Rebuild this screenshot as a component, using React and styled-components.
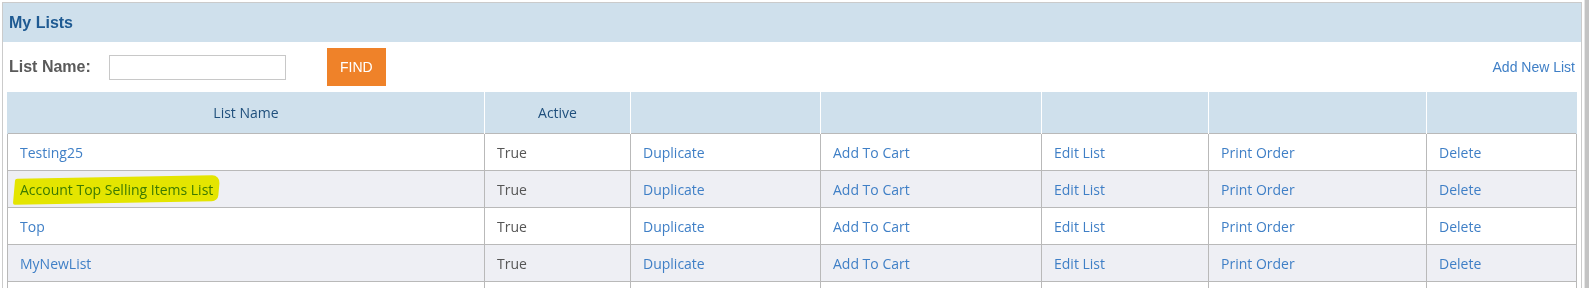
import React from "react";
import styled, { createGlobalStyle } from "styled-components";

const Global = createGlobalStyle`
  html, body { margin: 0; padding: 0; background: #fff; }
  body { font-family: "Open Sans", "Liberation Sans", Arial, sans-serif; }
`;

const Page = styled.div`
  display: flex;
  align-items: flex-start;
  width: 1589px;
  height: 288px;
  overflow: hidden;
`;

const Panel = styled.section`
  flex: 1;
  margin: 2px 0 0 2px;
  border: 1px solid #cbcbcb;
  border-bottom: none;
  height: 290px;
  background: #fff;
`;

const ScrollTrack = styled.div`
  width: 8px;
  height: 288px;
  flex: none;
  box-sizing: border-box;
  border-left: 2px solid #fff;
  border-right: 5px solid #c3c3c3;
  background: #e6e6e6;
`;

const PanelHeader = styled.h2`
  margin: 0;
  height: 39px;
  background: #cfe0ec;
  display: flex;
  align-items: center;
  padding: 0 6px;
  font-family: "Liberation Sans", Arial, sans-serif;
  font-size: 16px;
  font-weight: bold;
  color: #1e5a92;
`;

const Toolbar = styled.div`
  height: 50px;
  display: flex;
  align-items: center;
  padding: 0 6px;
  font-family: "Liberation Sans", Arial, sans-serif;
`;

const Label = styled.label`
  font-size: 16px;
  font-weight: bold;
  color: #5a5a5a;
  margin-right: 18px;
`;

const TextInput = styled.input`
  width: 177px;
  height: 25px;
  box-sizing: border-box;
  border: 1px solid #c8c8c8;
  padding: 2px 4px;
  margin: 0 41px 0 0;
  outline: none;
`;

const FindButton = styled.button`
  width: 59px;
  height: 38px;
  border: none;
  background: #ef8229;
  color: #fff;
  font-family: "Liberation Sans", Arial, sans-serif;
  font-size: 14px;
  padding: 0;
  margin-top: -1px;
  cursor: pointer;
`;

const AddLink = styled.a`
  margin-left: auto;
  font-size: 14px;
  color: #3f7fc6;
  text-decoration: none;
`;

const TableWrap = styled.div`
  padding: 0 4px;
`;

const Table = styled.table`
  width: 100%;
  border-collapse: collapse;
  table-layout: fixed;
  font-size: 14px;
`;

const Th = styled.th`
  height: 41px;
  padding: 0 12px;
  background: #cfe0ec;
  border-left: 1px solid #fff;
  border-right: 1px solid #fff;
  font-weight: normal;
  color: #1f4f7c;
  text-align: center;
  &:first-child { border-left: 1px solid #cfe0ec; }
  &:last-child { border-right: 1px solid #cfe0ec; }
`;

const Row = styled.tr`
  background: ${(p) => (p.$alt ? "#eeeff4" : "#fff")};
`;

const Td = styled.td`
  height: 36px;
  padding: 0 12px;
  border: 1px solid #b9b9b9;
  color: ${(p) => (p.$plain ? "#555" : "#3f7fc6")};
  white-space: nowrap;
`;

const CellLink = styled.a`
  color: #3f7fc6;
  text-decoration: none;
`;

const Highlighted = styled.span`
  position: relative;
  display: inline-block;
  &::after {
    content: "";
    position: absolute;
    left: -6px;
    right: -6px;
    top: -3px;
    bottom: -4px;
    background: #f5f500;
    mix-blend-mode: multiply;
    border-radius: 2px 8px 6px 2px;
    transform: rotate(-1deg) skewX(-6deg);
    pointer-events: none;
  }
`;

const widths = [477, 146, 190, 221, 167, 218, 150];

const rows = ["Testing25", "Account Top Selling Items List", "Top", "MyNewList"];

export default function App() {
  return (
    <>
      <Global />
      <Page>
        <Panel>
          <PanelHeader>My Lists</PanelHeader>
          <Toolbar>
            <Label>List Name:</Label>
            <TextInput type="text" />
            <FindButton>FIND</FindButton>
            <AddLink href="#">Add New List</AddLink>
          </Toolbar>
          <TableWrap>
            <Table>
              <colgroup>
                {widths.map((w, i) => (
                  <col key={i} style={{ width: w }} />
                ))}
              </colgroup>
              <thead>
                <tr>
                  <Th>List Name</Th>
                  <Th>Active</Th>
                  <Th />
                  <Th />
                  <Th />
                  <Th />
                  <Th />
                </tr>
              </thead>
              <tbody>
                {rows.map((name, i) => (
                  <Row key={name} $alt={i % 2 === 1}>
                    <Td>
                      {i === 1 ? (
                        <Highlighted>
                          <CellLink href="#">{name}</CellLink>
                        </Highlighted>
                      ) : (
                        <CellLink href="#">{name}</CellLink>
                      )}
                    </Td>
                    <Td $plain>True</Td>
                    <Td><CellLink href="#">Duplicate</CellLink></Td>
                    <Td><CellLink href="#">Add To Cart</CellLink></Td>
                    <Td><CellLink href="#">Edit List</CellLink></Td>
                    <Td><CellLink href="#">Print Order</CellLink></Td>
                    <Td><CellLink href="#">Delete</CellLink></Td>
                  </Row>
                ))}
                <Row>
                  <Td /><Td /><Td /><Td /><Td /><Td /><Td />
                </Row>
              </tbody>
            </Table>
          </TableWrap>
        </Panel>
        <ScrollTrack />
      </Page>
    </>
  );
}
